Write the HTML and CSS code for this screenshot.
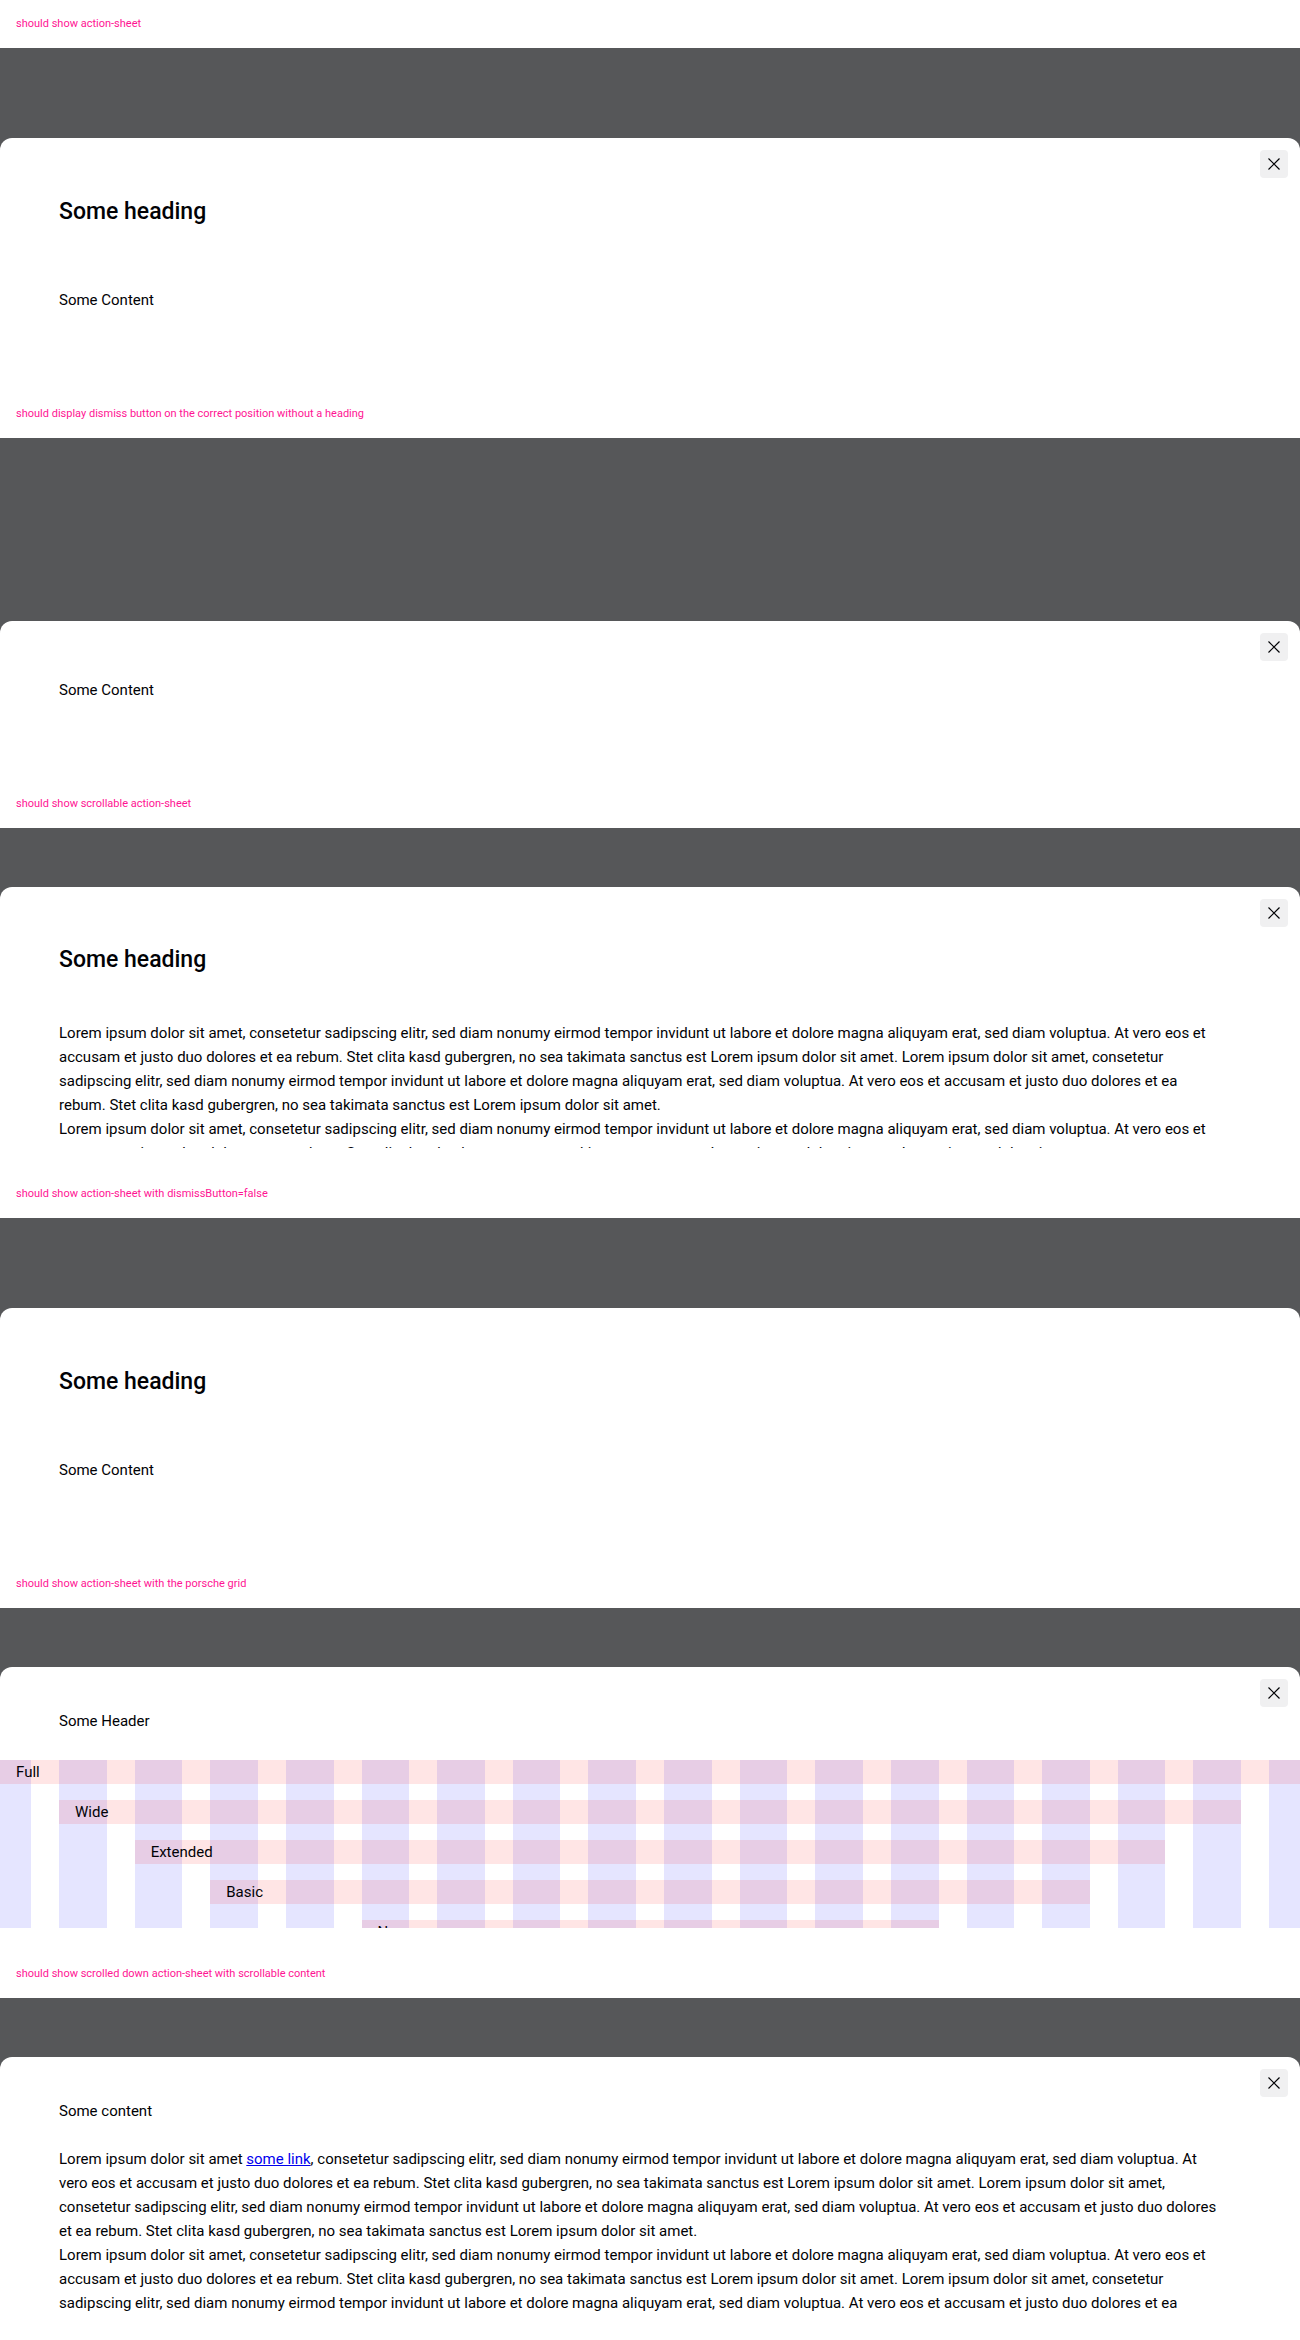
FILE: index.html
```html
<!DOCTYPE html>
<html lang="en">
<head>
<meta charset="utf-8">
<meta name="viewport" content="width=device-width, initial-scale=1">
<title>Action sheet</title>
<link rel="stylesheet" href="styles.css">
</head>
<body>
<section class="example">
  <p class="label">should show action-sheet</p>
  <div class="backdrop">
    <div class="sheet">
      <button class="dismiss" type="button" aria-label="Dismiss"><svg class="icon" viewBox="0 0 12 12"><path d="M0.5 0.5L11.5 11.5M11.5 0.5L0.5 11.5"/></svg></button>
      <h2 class="heading heading-spaced">Some heading</h2>
      <div class="content content-short">Some Content</div>
    </div>
  </div>
</section>
<section class="example">
  <p class="label">should display dismiss button on the correct position without a heading</p>
  <div class="backdrop">
    <div class="sheet sheet-plain">
      <button class="dismiss" type="button" aria-label="Dismiss"><svg class="icon" viewBox="0 0 12 12"><path d="M0.5 0.5L11.5 11.5M11.5 0.5L0.5 11.5"/></svg></button>
      <div class="content content-short">Some Content</div>
    </div>
  </div>
</section>
<section class="example">
  <p class="label">should show scrollable action-sheet</p>
  <div class="backdrop">
    <div class="sheet sheet-tall">
      <button class="dismiss" type="button" aria-label="Dismiss"><svg class="icon" viewBox="0 0 12 12"><path d="M0.5 0.5L11.5 11.5M11.5 0.5L0.5 11.5"/></svg></button>
      <h2 class="heading">Some heading</h2>
      <div class="content scroller">
        Lorem ipsum dolor sit amet, consetetur sadipscing elitr, sed diam nonumy eirmod tempor invidunt ut labore et dolore magna aliquyam erat, sed diam voluptua. At vero eos et<br>
        accusam et justo duo dolores et ea rebum. Stet clita kasd gubergren, no sea takimata sanctus est Lorem ipsum dolor sit amet. Lorem ipsum dolor sit amet, consetetur<br>
        sadipscing elitr, sed diam nonumy eirmod tempor invidunt ut labore et dolore magna aliquyam erat, sed diam voluptua. At vero eos et accusam et justo duo dolores et ea<br>
        rebum. Stet clita kasd gubergren, no sea takimata sanctus est Lorem ipsum dolor sit amet.<br>
        Lorem ipsum dolor sit amet, consetetur sadipscing elitr, sed diam nonumy eirmod tempor invidunt ut labore et dolore magna aliquyam erat, sed diam voluptua. At vero eos et<br>
        accusam et justo duo dolores et ea rebum. Stet clita kasd gubergren, no sea takimata sanctus est Lorem ipsum dolor sit amet. Lorem ipsum dolor sit amet, consetetur
      </div>
    </div>
  </div>
</section>
<section class="example">
  <p class="label">should show action-sheet with dismissButton=false</p>
  <div class="backdrop">
    <div class="sheet">
      <h2 class="heading heading-spaced">Some heading</h2>
      <div class="content content-short">Some Content</div>
    </div>
  </div>
</section>
<section class="example">
  <p class="label">should show action-sheet with the porsche grid</p>
  <div class="backdrop">
    <div class="sheet sheet-compact">
      <button class="dismiss" type="button" aria-label="Dismiss"><svg class="icon" viewBox="0 0 12 12"><path d="M0.5 0.5L11.5 11.5M11.5 0.5L0.5 11.5"/></svg></button>
      <div class="content header">Some Header</div>
      <div class="scroller">
        <div class="layers">
          <div class="grid">
            <i class="column"></i><i class="column"></i><i class="column"></i><i class="column"></i><i class="column"></i><i class="column"></i>
            <i class="column"></i><i class="column"></i><i class="column"></i><i class="column"></i><i class="column"></i><i class="column"></i>
            <i class="column"></i><i class="column"></i><i class="column"></i><i class="column"></i><i class="column"></i><i class="column"></i>
          </div>
          <div class="grid rows">
            <div class="span full">Full</div>
            <div class="span wide">Wide</div>
            <div class="span extended">Extended</div>
            <div class="span basic">Basic</div>
            <div class="span narrow">Narrow</div>
          </div>
        </div>
      </div>
    </div>
  </div>
</section>
<section class="example">
  <p class="label">should show scrolled down action-sheet with scrollable content</p>
  <div class="backdrop">
    <div class="sheet sheet-compact">
      <button class="dismiss" type="button" aria-label="Dismiss"><svg class="icon" viewBox="0 0 12 12"><path d="M0.5 0.5L11.5 11.5M11.5 0.5L0.5 11.5"/></svg></button>
      <div class="content scroller">
        Some content<br><br>
        Lorem ipsum dolor sit amet <a class="link" href="#">some link</a>, consetetur sadipscing elitr, sed diam nonumy eirmod tempor invidunt ut labore et dolore magna aliquyam erat, sed diam voluptua. At<br>
        vero eos et accusam et justo duo dolores et ea rebum. Stet clita kasd gubergren, no sea takimata sanctus est Lorem ipsum dolor sit amet. Lorem ipsum dolor sit amet,<br>
        consetetur sadipscing elitr, sed diam nonumy eirmod tempor invidunt ut labore et dolore magna aliquyam erat, sed diam voluptua. At vero eos et accusam et justo duo dolores<br>
        et ea rebum. Stet clita kasd gubergren, no sea takimata sanctus est Lorem ipsum dolor sit amet.<br>
        Lorem ipsum dolor sit amet, consetetur sadipscing elitr, sed diam nonumy eirmod tempor invidunt ut labore et dolore magna aliquyam erat, sed diam voluptua. At vero eos et<br>
        accusam et justo duo dolores et ea rebum. Stet clita kasd gubergren, no sea takimata sanctus est Lorem ipsum dolor sit amet. Lorem ipsum dolor sit amet, consetetur<br>
        sadipscing elitr, sed diam nonumy eirmod tempor invidunt ut labore et dolore magna aliquyam erat, sed diam voluptua. At vero eos et accusam et justo duo dolores et ea
      </div>
    </div>
  </div>
</section>
</body>
</html>
```
FILE: styles.css
```css
* { box-sizing: border-box; }
body {
  margin: 0;
  background: #fff;
  color: #010205;
  font: 15px/24px Roboto, "Liberation Sans", sans-serif;
}
.label {
  margin: 0;
  padding: 12px 16px;
  color: #ff1493;
  font-size: 11px;
}
.backdrop {
  display: flex;
  flex-direction: column;
  justify-content: flex-end;
  min-height: 342px;
  background: #565759;
}
.sheet {
  position: relative;
  display: flex;
  flex-direction: column;
  max-height: 283px;
  padding: 56px 0 22px;
  border-radius: 12px 12px 0 0;
  background: #fff;
}
.sheet-plain { padding-top: 57px; }
.sheet-tall { padding-top: 55px; }
.sheet-compact {
  min-height: 283px;
  padding-top: 42px;
}
.dismiss {
  position: absolute;
  top: 12px;
  right: 12px;
  display: grid;
  place-items: center;
  width: 28px;
  height: 28px;
  padding: 0;
  border: 0;
  border-radius: 4px;
  background: #f0f0f1;
}
.icon {
  width: 12px;
  height: 12px;
  fill: none;
  stroke: #010205;
  stroke-width: 1.2;
}
.heading {
  margin: 0 59px 43px;
  font-size: 23px;
  line-height: 36px;
  font-weight: 500;
}
.heading-spaced { margin-bottom: 58px; }
.content {
  padding: 0 59px;
  white-space: nowrap;
}
.content-short { padding-bottom: 56px; }
.header { padding-bottom: 27px; }
.scroller {
  flex: 1;
  min-height: 0;
  overflow: hidden;
}
.link { color: #00e; }
.layers { display: grid; }
.grid {
  grid-area: 1 / 1;
  display: grid;
  grid-template-columns: 31px repeat(16, minmax(0, 1fr)) 31px;
  column-gap: 28px;
}
.rows {
  grid-auto-rows: 24px;
  row-gap: 16px;
}
.column { background: rgba(0, 0, 255, 0.1); }
.span {
  padding-left: 16px;
  background: rgba(255, 0, 0, 0.1);
}
.full { grid-area: 1 / 1 / auto / -1; }
.wide { grid-area: 2 / 2 / auto / -2; }
.extended { grid-area: 3 / 3 / auto / -3; }
.basic { grid-area: 4 / 4 / auto / -4; }
.narrow { grid-area: 5 / 6 / auto / -6; }
```
